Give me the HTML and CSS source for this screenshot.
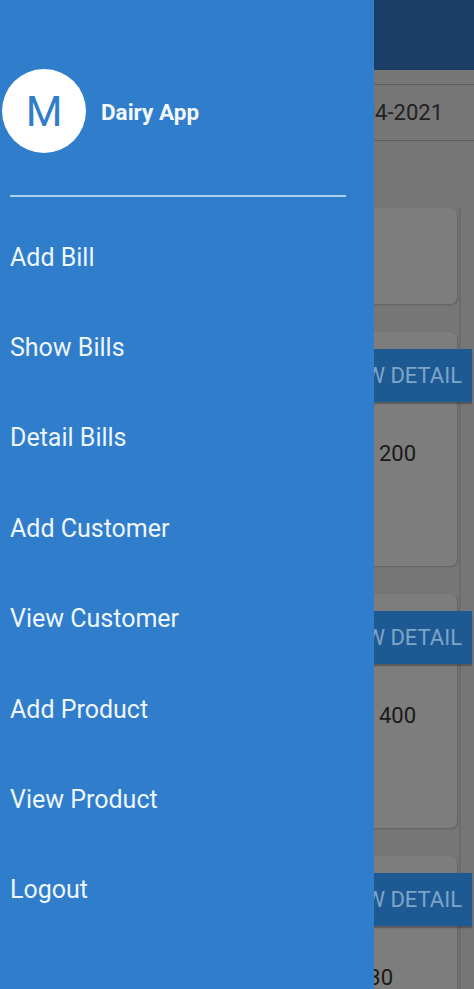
FILE: index.html
```html
<!DOCTYPE html>
<html>
<head>
<meta charset="utf-8">
<link rel="stylesheet" href="styles.css">
</head>
<body>
<div class="app">
  <header class="appbar"></header>
  <div class="date-field"><span class="date-text">12-04-2021</span></div>
  <div class="cards">
    <div class="card card-summary"></div>
    <div class="card">
      <div class="btn">VIEW DETAIL</div>
      <div class="row"><span class="value">200</span></div>
    </div>
    <div class="card">
      <div class="btn">VIEW DETAIL</div>
      <div class="row"><span class="value">400</span></div>
    </div>
    <div class="card">
      <div class="btn">VIEW DETAIL</div>
      <div class="row"><span class="value value-shift">330</span></div>
    </div>
  </div>
</div>

<nav class="drawer">
  <div class="drawer-head">
    <div class="avatar">M</div>
    <div class="app-name">Dairy App</div>
  </div>
  <div class="divider"></div>
  <ul class="menu">
    <li>Add Bill</li>
    <li>Show Bills</li>
    <li>Detail Bills</li>
    <li>Add Customer</li>
    <li>View Customer</li>
    <li>Add Product</li>
    <li>View Product</li>
    <li>Logout</li>
  </ul>
</nav>
</body>
</html>
```

FILE: styles.css
```css
html, body {
  margin: 0;
  padding: 0;
}
body {
  width: 474px;
  height: 989px;
  overflow: hidden;
  position: relative;
  background: #767676;
  font-family: Roboto, "Liberation Sans", sans-serif;
}
.app {
  width: 474px;
  height: 989px;
  overflow: hidden;
  background: #767676;
}
.appbar {
  height: 70px;
  background: #1b3e66;
}
.date-field {
  margin-top: 14px;
  height: 55px;
  border-top: 1px solid #5f5f5f;
  border-bottom: 1px solid #5f5f5f;
  display: flex;
  align-items: center;
  justify-content: flex-end;
  padding-right: 31px;
}
.date-text {
  font-size: 22px;
  color: #222;
}
.cards {
  margin-top: 67px;
  display: flex;
  flex-direction: column;
  gap: 28px;
  padding-left: 16px;
  padding-right: 2px;
  margin-right: 13px;
  border-right: 2px solid #6c6c6c;
}
.card {
  background: #7d7d7d;
  border-radius: 7px;
  box-shadow: 1px 1px 2px rgba(0,0,0,0.18);
  height: 234px;
  padding-top: 17px;
  box-sizing: border-box;
  flex-shrink: 0;
}
.card-summary {
  height: 96px;
}
.btn {
  height: 53px;
  background: #1d5a94;
  margin-right: -15px;
  color: #7ea4c7;
  font-size: 22px;
  display: flex;
  align-items: center;
  justify-content: flex-end;
  padding-right: 10px;
  box-shadow: 0 2px 1px rgba(0,0,0,0.25);
}
.row {
  display: flex;
  justify-content: flex-end;
  height: 102px;
  align-items: center;
  font-size: 22px;
  color: #1a1a1a;
}
.value {
  width: 78px;
}
.value-shift {
  margin-left: -23px;
  width: 55px;
  padding-right: 46px;
}
.drawer {
  position: absolute;
  left: 0;
  top: 0;
  width: 374px;
  height: 989px;
  background: #2f7dcb;
  padding-top: 69px;
  box-sizing: border-box;
}
.drawer-head {
  display: flex;
  align-items: center;
  gap: 15px;
  padding-left: 2px;
}
.avatar {
  width: 84px;
  height: 84px;
  border-radius: 50%;
  background: #ffffff;
  color: #2f7dcb;
  font-size: 42px;
  display: flex;
  align-items: center;
  justify-content: center;
}
.app-name {
  color: #f4f9ff;
  font-weight: 700;
  font-size: 22.5px;
  margin-top: 2px;
}
.divider {
  margin: 42px 0 0 10px;
  width: 336px;
  height: 2px;
  background: #a9d1f2;
}
.menu {
  list-style: none;
  margin: 15px 0 0;
  padding: 0;
}
.menu li {
  height: 90.4px;
  display: flex;
  align-items: center;
  padding-left: 10px;
  color: #eef6fd;
  font-size: 25px;
}
```
